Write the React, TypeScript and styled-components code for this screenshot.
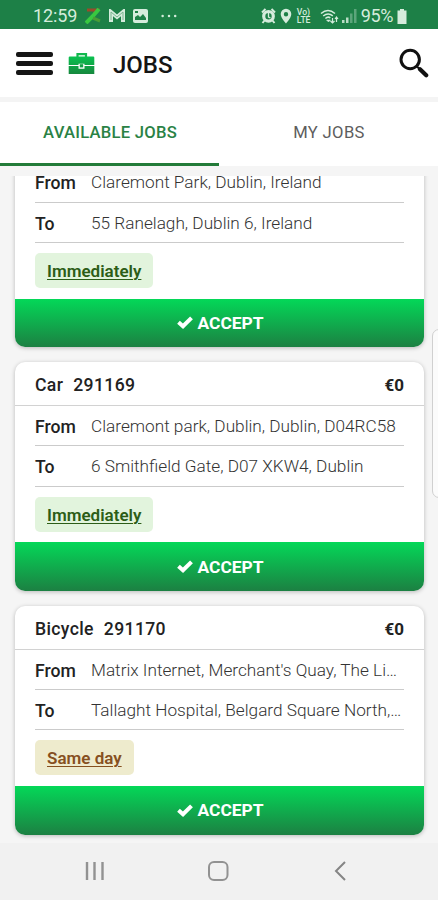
import React from "react";
import styled, { createGlobalStyle } from "styled-components";

const GlobalStyle = createGlobalStyle`
  * { box-sizing: border-box; }
  body { margin: 0; background: #f5f5f5; font-family: Roboto, "Liberation Sans", sans-serif; }
  svg { display: block; flex: none; }
`;

const Screen = styled.div`
  position: relative;
  display: flex;
  flex-direction: column;
  width: 438px;
  height: 900px;
  overflow: hidden;
  background: #f5f5f5;
`;

const StatusBar = styled.div`
  flex: none;
  display: flex;
  justify-content: space-between;
  height: 29px;
  padding: 4px 31px 0 33px;
  background: #1d8047;
  color: #d5ecdc;
`;

const StatusGroup = styled.div`
  display: flex;
  align-items: center;
  height: 24px;
`;

const StatusText = styled.span<{ $spacing: number; $gap?: number }>`
  margin-left: ${(p) => p.$gap ?? 0}px;
  font-size: 18px;
  line-height: 24px;
  letter-spacing: ${(p) => p.$spacing}px;
`;

const StatusIcon = styled.svg<{ $gap: number }>`
  margin-left: ${(p) => p.$gap}px;
`;

const Lte = styled.span`
  display: flex;
  flex-direction: column;
  width: 16px;
  margin-left: 5px;
  font-size: 8.6px;
  font-weight: 500;
  line-height: 8.5px;
`;

const Header = styled.header`
  flex: none;
  display: flex;
  align-items: center;
  height: 68px;
  padding: 0 9px 0 16px;
  background: #fff;
`;

const MenuButton = styled.div`
  display: flex;
  flex-direction: column;
  justify-content: space-between;
  width: 37px;
  height: 23px;
  margin-top: 1px;
`;

const MenuBar = styled.span`
  height: 4.6px;
  border-radius: 2px;
  background: #151515;
`;

const BriefcaseIcon = styled.svg`
  margin: 2px 0 0 15px;
`;

const Title = styled.h1`
  flex: 1;
  margin: 3px 0 0 18px;
  font-size: 24px;
  font-weight: 500;
  line-height: 28px;
  color: #151515;
`;

const Tabs = styled.nav`
  flex: none;
  display: grid;
  grid-template-columns: 219px 219px;
  height: 69px;
  border-top: 5px solid #f4f4f4;
  background: #fff;
`;

const Tab = styled.div<{ $active?: boolean }>`
  display: flex;
  align-items: center;
  justify-content: center;
  padding-bottom: ${(p) => (p.$active ? 0 : 2)}px;
  padding-left: 1px;
  font-size: 16.6px;
  font-weight: ${(p) => (p.$active ? 500 : 400)};
  letter-spacing: ${(p) => (p.$active ? 0.25 : 0.35)}px;
  color: ${(p) => (p.$active ? "#2a8245" : "#5d5d5d")};
  border-bottom: ${(p) => (p.$active ? "3px solid #237b39" : "2px solid #fff")};
`;

const List = styled.main`
  flex: none;
  display: flex;
  flex-direction: column;
  justify-content: flex-end;
  gap: 15px;
  height: 667px;
  margin-top: 10px;
  padding: 0 14px 8.5px 15px;
  overflow: hidden;
`;

const Card = styled.article`
  flex: none;
  border-radius: 10px;
  background: #fff;
  box-shadow: 0 1px 4px rgba(0, 0, 0, 0.25);
`;

const CardHeader = styled.div`
  display: flex;
  justify-content: space-between;
  height: 44px;
  padding: 2px 20px 0;
  border-bottom: 1px solid #d2d2d2;
  font-size: 17.6px;
  font-weight: 500;
  line-height: 43px;
  color: #222;
`;

const JobName = styled.span`
  display: flex;
  gap: 10px;
  letter-spacing: 0.35px;
`;

const Price = styled.span`
  font-weight: 700;
  font-size: 17px;
`;

const CardBody = styled.div`
  height: 136.2px;
  padding: 0 20px;
`;

const Row = styled.div`
  display: flex;
  height: 40.3px;
  border-bottom: 1px solid #cbcbcb;
`;

const RowLabel = styled.span`
  flex: none;
  width: 56px;
  font-size: 17.6px;
  font-weight: 500;
  line-height: 42.6px;
  color: #222;
`;

const RowValue = styled.span`
  flex: 1;
  min-width: 0;
  overflow: hidden;
  white-space: nowrap;
  text-overflow: ellipsis;
  font-size: 17.22px;
  font-weight: 300;
  line-height: 41px;
  color: #333;
`;

const Badge = styled.span<{ $tone: "green" | "amber" }>`
  display: inline-block;
  height: 35px;
  margin-top: 10px;
  padding: 0 12px;
  border-radius: 5px;
  background: ${(p) => (p.$tone === "green" ? "#e2f4dd" : "#eeebcd")};
  color: ${(p) => (p.$tone === "green" ? "#2c5d17" : "#86501f")};
  font-size: 17px;
  font-weight: 600;
  line-height: 36.5px;
  text-decoration: underline;
  text-decoration-thickness: 1px;
  text-underline-offset: 2px;
`;

const AcceptButton = styled.div`
  display: flex;
  align-items: center;
  justify-content: center;
  gap: 4px;
  height: 48.5px;
  padding-left: 2px;
  border-radius: 0 0 10px 10px;
  background: linear-gradient(#04d858, #1c8042);
  color: #fff;
  font-size: 17.4px;
  font-weight: 700;
`;

const SidePanel = styled.div`
  position: absolute;
  top: 329px;
  right: -10px;
  width: 16px;
  height: 169px;
  border: 1px solid #d0d0d0;
  border-radius: 7px;
  background: #fbfbfb;
`;

const NavBar = styled.footer`
  flex: none;
  display: flex;
  justify-content: space-between;
  height: 58px;
  padding: 17px 91px 0 84px;
  background: #f1f1f1;
`;

type Job = {
  name?: string;
  id?: string;
  from: string;
  to: string;
  badge: string;
  tone: "green" | "amber";
};

const jobs: Job[] = [
  { from: "Claremont Park, Dublin, Ireland", to: "55 Ranelagh, Dublin 6, Ireland", badge: "Immediately", tone: "green" },
  { name: "Car", id: "291169", from: "Claremont park, Dublin, Dublin, D04RC58", to: "6 Smithfield Gate, D07 XKW4, Dublin", badge: "Immediately", tone: "green" },
  { name: "Bicycle", id: "291170", from: "Matrix Internet, Merchant's Quay, The Liberties, Dublin", to: "Tallaght Hospital, Belgard Square North, Tallaght", badge: "Same day", tone: "amber" },
];

function JobCard({ job }: { job: Job }) {
  return (
    <Card>
      {job.name && (
        <CardHeader>
          <JobName><span>{job.name}</span><span>{job.id}</span></JobName>
          <Price>€0</Price>
        </CardHeader>
      )}
      <CardBody>
        <Row><RowLabel>From</RowLabel><RowValue>{job.from}</RowValue></Row>
        <Row><RowLabel>To</RowLabel><RowValue>{job.to}</RowValue></Row>
        <Badge $tone={job.tone}>{job.badge}</Badge>
      </CardBody>
      <AcceptButton>
        <svg width="16" height="13" viewBox="0 0 16 13" fill="none" stroke="#fff" strokeWidth="4"><path d="M1.5 6.2 6 10.2 14.5 1.8" /></svg>
        ACCEPT
      </AcceptButton>
    </Card>
  );
}

export default function App() {
  return (
    <>
      <GlobalStyle />
      <Screen>
        <StatusBar>
          <StatusGroup>
            <StatusText $spacing={-0.1}>12:59</StatusText>
            <StatusIcon $gap={8} width="17" height="16" viewBox="0 0 17 16" fill="none">
              <path d="M2 2h10l-3 4" stroke="#994b2b" strokeWidth="3" />
              <path d="M14 1 8 8l-7 7" stroke="#38c840" strokeWidth="4" />
              <path d="m8 10 7 3" stroke="#499d36" strokeWidth="3" />
            </StatusIcon>
            <StatusIcon $gap={6} width="18" height="14" viewBox="0 0 18 14" fill="none" stroke="#d5ecdc">
              <path d="M3 13V3l6 5 6-5v10" strokeWidth="4" />
              <path d="M3 11V3l6 5 6-5v8" stroke="#78b48e" strokeWidth="1" />
            </StatusIcon>
            <StatusIcon $gap={7} width="15" height="14" viewBox="0 0 15 14">
              <rect width="15" height="14" rx="2" fill="#d5ecdc" />
              <path d="M2 11V8l3-2 2 2 3-3 3 4v2z" fill="#1d8047" />
              <rect x="2" y="2" width="3" height="2" fill="#1d8047" />
            </StatusIcon>
            <StatusIcon $gap={13} width="16" height="4" viewBox="0 0 16 4" fill="#d5ecdc">
              <circle cx="1.6" cy="2" r="1.25" /><circle cx="8" cy="2" r="1.25" /><circle cx="14.2" cy="2" r="1.25" />
            </StatusIcon>
          </StatusGroup>
          <StatusGroup>
            <StatusIcon $gap={0} width="15" height="16" viewBox="0 0 15 16" fill="none" stroke="#d5ecdc">
              <circle cx="7.5" cy="8.3" r="4.8" strokeWidth="3.2" />
              <path d="M1 4.5 4.5 1M10.5 1 14 4.5M3.5 12.5 1.5 15M11.5 12.5l2 2.5" strokeWidth="2" />
              <path d="M7.5 5v4l2 1" strokeWidth="1.3" />
            </StatusIcon>
            <StatusIcon $gap={4} width="12" height="16" viewBox="0 0 12 16">
              <path d="M6 .8A5.3 5.3 0 0 0 .7 6c0 4 5.3 9.5 5.3 9.5S11.3 10 11.3 6A5.3 5.3 0 0 0 6 .8Zm0 3.2a2.2 2.2 0 1 1 0 4.4 2.2 2.2 0 0 1 0-4.4Z" fill="#d5ecdc" />
            </StatusIcon>
            <Lte><span>Vo)</span><span>LTE</span></Lte>
            <StatusIcon $gap={7} width="19" height="15" viewBox="0 0 19 15" fill="none" stroke="#d5ecdc" strokeWidth="1.5">
              <path d="M1 4.5Q8 -1.5 15 4.5M3.2 7Q8 3 12.8 6.8M5.4 9.5Q8 7 10.3 9" />
              <path d="m6.5 11 2 2 2-2z" fill="#d5ecdc" strokeWidth=".5" />
              <path d="M12.5 9v5m-2-2 2 2 2-2M16.5 13V8m-1.5 2 1.5-2 1.5 2" strokeWidth="1.2" />
            </StatusIcon>
            <StatusIcon $gap={3} width="15" height="14" viewBox="0 0 15 14" fill="#d5ecdc">
              <path d="M0 11h2.5v3H0zM4 8.5h2.5V14H4z" opacity=".85" />
              <path d="M8 4.5h2.5V14H8zM12 0h2.5v14H12z" opacity=".35" />
            </StatusIcon>
            <StatusText $spacing={-0.4} $gap={4}>95%</StatusText>
            <StatusIcon $gap={4} width="10" height="15" viewBox="0 0 10 15" fill="#d5ecdc">
              <path d="M3 0h4v1.5h2.5V15h-9V1.5H3z" />
            </StatusIcon>
          </StatusGroup>
        </StatusBar>
        <Header>
          <MenuButton><MenuBar /><MenuBar /><MenuBar /></MenuButton>
          <BriefcaseIcon width="27" height="24" viewBox="0 0 27 24">
            <defs>
              <linearGradient id="case" x1="0" y1="0" x2="0" y2="1">
                <stop offset="0" stopColor="#0ac250" /><stop offset="1" stopColor="#16883e" />
              </linearGradient>
            </defs>
            <path d="M9.5 5V2.2H18V5" fill="none" stroke="#12b84e" strokeWidth="2.2" />
            <path d="M1.8 4.5h23.4a1.1 1.1 0 0 1 1.1 1.1V13h-9.8v-1.2h-6V13H.7V5.6a1.1 1.1 0 0 1 1.1-1.1ZM.7 14h9.8v2.8h6V14h9.8v8H.7Z" fill="url(#case)" />
            <rect x="11.8" y="12.2" width="3.4" height="3.2" fill="#12a044" />
          </BriefcaseIcon>
          <Title>JOBS</Title>
          <svg width="30" height="32" viewBox="0 0 30 32" fill="none" stroke="#111">
            <circle cx="11.2" cy="12.5" r="9.2" strokeWidth="3" />
            <path d="m18 19.5 2.5 2.5" strokeWidth="2" />
            <path d="m21 22.3 6.2 6" strokeWidth="4.2" strokeLinecap="round" />
          </svg>
        </Header>
        <Tabs>
          <Tab $active>AVAILABLE JOBS</Tab>
          <Tab>MY JOBS</Tab>
        </Tabs>
        <List>
          {jobs.map((job) => <JobCard key={job.from} job={job} />)}
        </List>
        <NavBar>
          <svg width="21" height="22" viewBox="0 0 21 22" stroke="#929292" strokeWidth="2.4"><path d="M3 2v18M10.5 2v18M18.5 2v18" /></svg>
          <svg width="24" height="22" viewBox="0 0 24 22" fill="none" stroke="#929292" strokeWidth="2"><rect x="2" y="2" width="18.5" height="18" rx="5" /></svg>
          <svg width="14" height="22" viewBox="0 0 14 22" fill="none" stroke="#858585" strokeWidth="2"><path d="m12 2-9 9 9 9" /></svg>
        </NavBar>
        <SidePanel />
      </Screen>
    </>
  );
}
